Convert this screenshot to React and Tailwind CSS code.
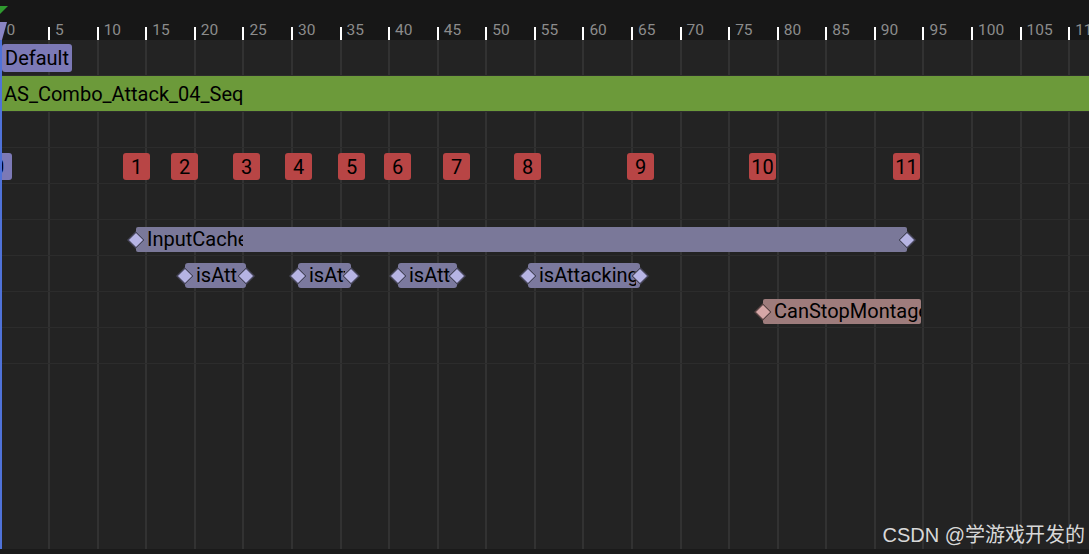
import React from "react";

const FONT = { fontFamily: "Roboto, 'Noto Sans', sans-serif" };
const tickX = (f) => f * 9.715 + 0.5;
const ticks = [];
for (let f = 0; f <= 115; f += 5) ticks.push(f);

const notifies = [
  { n: 1, pos: "left-[123px]" },
  { n: 2, pos: "left-[171px]" },
  { n: 3, pos: "left-[233px]" },
  { n: 4, pos: "left-[285px]" },
  { n: 5, pos: "left-[338px]" },
  { n: 6, pos: "left-[384px]" },
  { n: 7, pos: "left-[443px]" },
  { n: 8, pos: "left-[514px]" },
  { n: 9, pos: "left-[627px]" },
  { n: 10, pos: "left-[749px]" },
  { n: 11, pos: "left-[893px]" },
];

function Diamond({ pink = false }) {
  return (
    <span
      className={`block w-[12px] h-[12px] shrink-0 rotate-45 border-[1.5px] ${
        pink ? "bg-[#d6a7a7] border-[#4a3838]" : "bg-[#b6b4e4] border-[#3a394c]"
      }`}
    />
  );
}

/* A state bar: diamond, body with clipped label, optional end diamond.
   pos = left/width classes of the whole span on the timeline canvas */
function StateBar({ pos, label, textW, body, end = true, pink = false }) {
  return (
    <div className={`absolute top-[7px] h-[25px] flex items-center ${pos}`}>
      <div className="relative z-20 -mr-[6px]">
        <Diamond pink={pink} />
      </div>
      <div className={`flex-1 self-stretch flex items-center overflow-hidden ${body}`}>
        <span className={`ml-[11px] text-[20px] leading-[25px] text-black whitespace-nowrap overflow-hidden ${textW}`}>
          {label}
        </span>
      </div>
      {end && (
        <div className="relative z-20 -ml-[6px]">
          <Diamond pink={pink} />
        </div>
      )}
    </div>
  );
}

function Row({ children }) {
  return <div className="relative h-[36px] border-b border-[#2c2c2c] z-10">{children}</div>;
}

export default function App() {
  return (
    <div className="relative w-[1089px] h-[554px] overflow-hidden flex flex-col bg-[#232323]" style={FONT}>
      {/* Ruler */}
      <div className="relative h-[40px] bg-[#171717] shrink-0">
        {ticks.map((f) => (
          <div key={f} className="absolute top-0 bottom-0 flex items-end gap-[5px]" style={{ left: tickX(f) - 1 }}>
            <div className="w-[2px] h-[13px] bg-white" />
            <div className="pb-[2px] text-[15.5px] leading-[15px] text-[#8c8c8c]">{f}</div>
          </div>
        ))}
        {/* playhead marker */}
        <svg className="absolute left-0 top-0" width="10" height="40" viewBox="0 0 10 40">
          <polygon points="0,6 8,6 0,14" fill="#2f9a2f" />
          <polygon points="0,22 7,22 2,40 0,40" fill="#8985c4" />
        </svg>
      </div>

      {/* Main track area */}
      <div className="relative flex-1">
        {/* vertical grid lines */}
        {ticks.map((f) => (
          <div
            key={f}
            className="absolute top-0 bottom-0 w-[2px] bg-[#323232] z-0"
            style={{ left: tickX(f) - 1 }}
          />
        ))}

        <Row>
          <div className="absolute left-[2px] top-[4px] h-[28px] px-[3px] rounded-[3px] bg-[#7c79b6] text-[20px] leading-[28px] text-black">
            Default
          </div>
        </Row>
        <Row>
          <div className="h-full bg-[#6c9a3a] pl-[4px] text-[20px] leading-[36px] text-black">
            AS_Combo_Attack_04_Seq
          </div>
        </Row>
        <Row />
        <Row>
          <div className="absolute left-[-15px] top-[5px] w-[27px] h-[27px] rounded-[3px] bg-[#7c79b6] flex items-center justify-center text-[20px] text-black">
            0
          </div>
          {notifies.map(({ n, pos }) => (
            <div
              key={n}
              className={`absolute top-[5px] w-[27px] h-[27px] rounded-[3px] bg-[#b84545] flex items-center justify-center text-[20px] text-black ${pos}`}
            >
              {n}
            </div>
          ))}
        </Row>
        <Row />
        <Row>
          <StateBar pos="left-[130px] w-[783px]" label="InputCacheWindow" textW="max-w-[96px]" body="bg-[#7a7899] rounded-[2px]" />
        </Row>
        <Row>
          <StateBar pos="left-[179px] w-[73px]" label="isAttacking" textW="max-w-[42px]" body="bg-[#7b799e] rounded-[3px]" />
          <StateBar pos="left-[292px] w-[65px]" label="isAttacking" textW="max-w-[36px]" body="bg-[#7b799e] rounded-[3px]" />
          <StateBar pos="left-[392px] w-[71px]" label="isAttacking" textW="max-w-[42px]" body="bg-[#7b799e] rounded-[3px]" />
          <StateBar pos="left-[522px] w-[124px]" label="isAttacking" textW="max-w-[97px]" body="bg-[#7b799e] rounded-[3px]" />
        </Row>
        <Row>
          <StateBar pos="left-[757px] w-[164px]" label="CanStopMontage" textW="max-w-[150px]" body="bg-[#9e7c7c] rounded-[2px]" end={false} pink />
        </Row>
        <Row />

        {/* playhead line */}
        <div className="absolute left-0 top-0 bottom-0 w-[2px] bg-[#4f72d9] z-30" />

        {/* watermark */}
        <div
          className="absolute right-[4px] bottom-[2px] z-40 text-[20px] leading-[24px] text-[#d8d8d8]"
          style={{ fontFamily: "'Liberation Sans', 'Noto Sans CJK SC', sans-serif" }}
        >
          CSDN @学游戏开发的
        </div>
      </div>
      <div className="h-[5px] shrink-0 bg-[#1a1a1a]" />
    </div>
  );
}
